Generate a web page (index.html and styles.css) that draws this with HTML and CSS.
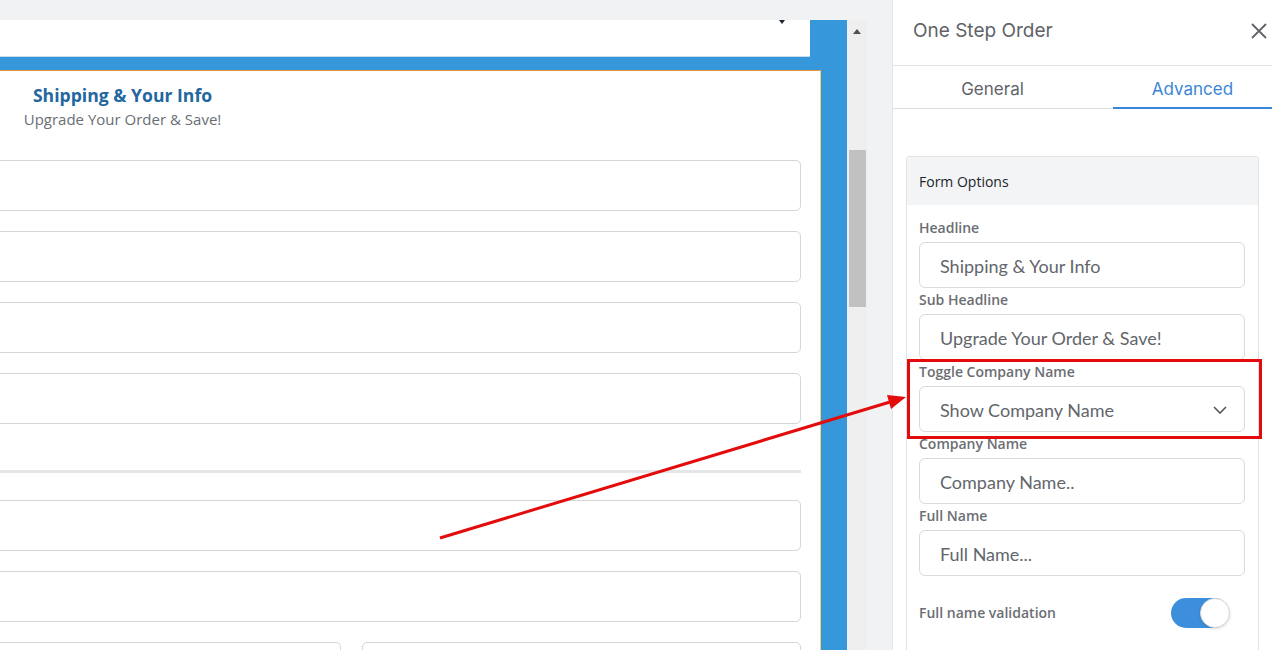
FILE: index.html
```html
<!DOCTYPE html>
<html lang="en">
<head>
    <meta charset="UTF-8">
    <title>One Step Order - Editor</title>
    <link rel="stylesheet" href="styles.css">
</head>
<body>

    <div class="app">
        <!-- Page editor -->
        <div class="editor">
            <div class="editor-top"></div>
            <div class="editor-main">
                <div class="canvas">
                    <div class="page-select">
                        <span class="page-caret"></span>
                    </div>

                    <div class="form-card">
                        <div class="form-head">
                            <h2 class="form-title">Shipping &amp; Your Info</h2>
                            <p class="form-sub">Upgrade Your Order &amp; Save!</p>
                        </div>

                        <div class="form-fields">
                            <div class="field"></div>
                            <div class="field"></div>
                            <div class="field"></div>
                            <div class="field"></div>
                            <div class="divider"></div>
                            <div class="field"></div>
                            <div class="field"></div>
                            <div class="field-row">
                                <div class="field"></div>
                                <div class="field"></div>
                            </div>
                        </div>
                    </div>
                </div>

                <div class="scrollbar">
                    <div class="scroll-up"><span></span></div>
                    <div class="scroll-thumb"></div>
                </div>
            </div>
        </div>

        <!-- Settings panel -->
        <aside class="panel">
            <div class="panel-header">
                <span class="panel-title">One Step Order</span>
                <svg class="close-icon" width="16" height="16" viewBox="0 0 16 16">
                    <path d="M1 1 L15 15 M15 1 L1 15" stroke="#5f6368" stroke-width="1.8" fill="none"/>
                </svg>
            </div>

            <div class="tabs">
                <div class="tab">General</div>
                <div class="tab active">Advanced</div>
            </div>

            <div class="panel-body">
                <div class="options-card">
                    <div class="options-head">Form Options</div>
                    <div class="options-body">
                        <label class="opt-label">Headline</label>
                        <div class="opt-input">Shipping &amp; Your Info</div>

                        <label class="opt-label">Sub Headline</label>
                        <div class="opt-input">Upgrade Your Order &amp; Save!</div>

                        <label class="opt-label">Toggle Company Name</label>
                        <div class="opt-input opt-select">
                            <span>Show Company Name</span>
                            <svg width="14" height="8" viewBox="0 0 14 8">
                                <polyline points="1,1 7,7 13,1" stroke="#555" stroke-width="1.6" fill="none"/>
                            </svg>
                        </div>

                        <label class="opt-label">Company Name</label>
                        <div class="opt-input">Company Name..</div>

                        <label class="opt-label">Full Name</label>
                        <div class="opt-input">Full Name...</div>

                        <div class="switch-row">
                            <span class="opt-label">Full name validation</span>
                            <span class="switch"><span class="knob"></span></span>
                        </div>
                    </div>
                </div>
            </div>
        </aside>
    </div>

    <!-- Annotation -->
    <div class="callout"></div>
    <svg class="arrow" width="1272" height="650" viewBox="0 0 1272 650">
        <line x1="440" y1="538" x2="890" y2="402" stroke="#e30b0b" stroke-width="3"/>
        <polygon points="906,397 891,409 887,395" fill="#e30b0b"/>
    </svg>

</body>
</html>
```

FILE: styles.css
```css
* {
    box-sizing: border-box;
}

body {
    margin: 0;
    width: 1272px;
    height: 650px;
    overflow: hidden;
    background-color: #f1f2f4;
    font-family: 'Open Sans', sans-serif;
    position: relative;
}

.app {
    display: flex;
    height: 650px;
}

/* ---------- editor ---------- */

.editor {
    width: 892px;
    flex-shrink: 0;
    background-color: #f1f2f4;
}

.editor-top {
    height: 20px;
}

.editor-main {
    display: flex;
    height: 630px;
}

.canvas {
    width: 847px;
    height: 630px;
    background-color: #3698db;
    overflow: hidden;
}

.page-select {
    position: relative;
    width: 810px;
    height: 37px;
    background-color: #fff;
    border-bottom: 1px solid #c7dcea;
}

.page-caret {
    position: absolute;
    left: 779px;
    top: 0;
    border-top: 4px solid #1d2230;
    border-left: 3px solid transparent;
    border-right: 3px solid transparent;
}

.form-card {
    margin-top: 13px;
    margin-left: -200px;
    width: 1021px;
    height: 600px;
    background-color: #fff;
    border: 1px solid #f4cf7e;
    border-top-color: #e0953c;
    padding: 12px 19px 0 20px;
}

.form-head {
    width: 603px;
    text-align: center;
}

.form-title {
    margin: 0;
    font-size: 17.6px;
    line-height: 24px;
    font-weight: 700;
    color: #23679f;
}

.form-sub {
    margin: 1px 0 0;
    font-size: 15px;
    line-height: 22px;
    color: #6b6e72;
}

.form-fields {
    display: flex;
    flex-direction: column;
    gap: 20px;
    margin-top: 30px;
}

.field {
    height: 51px;
    border: 1px solid #d6d6d6;
    border-radius: 5px;
}

.divider {
    height: 3px;
    margin: 26px 0 7px;
    background-color: #e5e6e8;
}

.field-row {
    display: grid;
    grid-template-columns: 520px 1fr;
    gap: 21px;
}

/* ---------- scrollbar ---------- */

.scrollbar {
    width: 20px;
    background-color: #efefef;
}

.scroll-up {
    height: 22px;
    display: flex;
    align-items: center;
    justify-content: center;
}

.scroll-up span {
    border-bottom: 5px solid #505050;
    border-left: 4px solid transparent;
    border-right: 4px solid transparent;
}

.scroll-thumb {
    margin: 108px 1px 0 2px;
    height: 157px;
    background-color: #c1c1c1;
}

/* ---------- settings panel ---------- */

.panel {
    width: 380px;
    background-color: #fff;
    border-left: 1px solid #e4e5e7;
    font-family: 'Inter', sans-serif;
}

.panel-header {
    height: 66px;
    display: flex;
    align-items: center;
    justify-content: space-between;
    padding: 0 5px 4px 20px;
    border-bottom: 1px solid #e2e3e5;
}

.panel-title {
    font-size: 19px;
    color: #5f6368;
}

.tabs {
    display: flex;
    height: 43px;
    border-bottom: 1px solid #dcdde0;
}

.tab {
    width: 199px;
    text-align: center;
    font-size: 17px;
    line-height: 42px;
    padding-top: 2px;
    color: #5f6368;
}

.tab.active {
    width: auto;
    flex: 1;
    margin-left: 21px;
    padding-top: 3px;
    color: #3a86d6;
    border-bottom: 2px solid #3a86d6;
    margin-bottom: -1px;
    line-height: 40px;
}

.panel-body {
    padding: 47px 13px 0 13px;
}

.options-card {
    border: 1px solid #e2e3e5;
    border-radius: 3px;
    height: 520px;
}

.options-head {
    height: 48px;
    line-height: 50px;
    padding-left: 12px;
    background-color: #f3f4f6;
    font-family: 'Open Sans', sans-serif;
    font-size: 14px;
    font-weight: 500;
    color: #212529;
}

.options-body {
    padding: 13px 13px 0 12px;
    display: flex;
    flex-direction: column;
}

.opt-label {
    font-family: 'Open Sans', sans-serif;
    font-size: 14px;
    font-weight: 600;
    line-height: 20px;
    color: #6b6e73;
}

.opt-input {
    height: 46px;
    margin: 4px 0 2px;
    padding: 1px 0 0 20px;
    border: 1px solid #d9dadc;
    border-radius: 6px;
    display: flex;
    align-items: center;
    font-family: 'Lato', sans-serif;
    font-size: 18px;
    color: #62666b;
}

.opt-select {
    justify-content: space-between;
    padding-right: 17px;
}

.switch-row {
    display: flex;
    align-items: center;
    justify-content: space-between;
    margin-top: 20px;
    padding-right: 16px;
}

.switch {
    position: relative;
    width: 58px;
    height: 30px;
    border-radius: 15px;
    background-color: #3d8fdc;
}

.knob {
    position: absolute;
    right: -1px;
    top: 0;
    width: 30px;
    height: 30px;
    border-radius: 50%;
    background-color: #fff;
    border: 1px solid #d6d8db;
    box-shadow: 0 1px 3px rgba(0, 0, 0, 0.15);
}

/* ---------- annotation ---------- */

.callout {
    position: absolute;
    left: 907px;
    top: 359px;
    width: 355px;
    height: 80px;
    border: 3px solid #e30b0b;
}

.arrow {
    position: absolute;
    left: 0;
    top: 0;
    pointer-events: none;
}
```
